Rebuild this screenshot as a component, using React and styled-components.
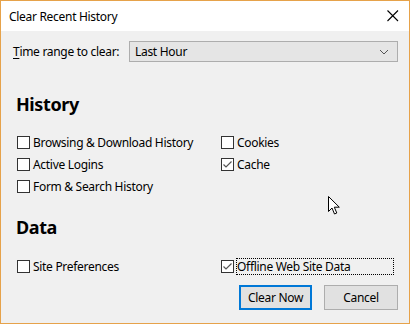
import styled, { createGlobalStyle } from 'styled-components'

const GlobalStyle = createGlobalStyle`
  html, body {
    margin: 0;
    padding: 0;
    background: #f0f0f0;
  }
  body {
    font-family: 'Noto Sans', 'Open Sans', sans-serif;
    font-size: 12px;
    letter-spacing: -0.3px;
    color: #000000;
  }
`

const Window = styled.div`
  position: relative;
  width: 410px;
  height: 324px;
  box-sizing: border-box;
  border: 1px solid #e6a24a;
  background: #f0f0f0;
  display: flex;
  flex-direction: column;
  overflow: hidden;
`

const TitleBar = styled.div`
  height: 30px;
  background: #ffffff;
  display: flex;
  align-items: center;
  justify-content: space-between;
  padding: 0 9px 0 8px;
`

const Title = styled.span`
  font-size: 12px;
  color: #000000;
`

const CloseButton = styled.span`
  display: flex;
  width: 14px;
  height: 14px;
`

const Body = styled.div`
  flex: 1;
  display: flex;
  flex-direction: column;
  padding: 10px 11px 0 12px;
`

const RangeRow = styled.div`
  display: flex;
  align-items: center;
  gap: 12px;
`

const RangeLabel = styled.label`
  width: 104px;
  white-space: nowrap;
  font-size: 12px;
  u {
    text-decoration: underline;
    text-underline-offset: 2px;
  }
`

const Select = styled.div`
  flex: 1;
  height: 21px;
  box-sizing: border-box;
  border: 1px solid #adadad;
  background: #e5e5e5;
  display: flex;
  align-items: center;
  justify-content: space-between;
  padding: 0 8px 0 5px;
  font-size: 12px;
`

const Heading = styled.h2`
  margin: ${(p) => p.$top}px 0 0 3px;
  font-size: 18px;
  line-height: 24px;
  font-weight: 700;
  letter-spacing: -0.4px;
`

const OptionGrid = styled.div`
  display: grid;
  grid-template-columns: 204px 1fr;
  grid-auto-rows: 13px;
  row-gap: 9px;
  margin: ${(p) => p.$top}px 0 0 4px;
`

const Option = styled.label`
  display: flex;
  align-items: center;
  height: 13px;
  gap: 2px;
  font-size: 12px;
  white-space: nowrap;
  grid-column: ${(p) => p.$col};
  grid-row: ${(p) => p.$row};
`

const Box = styled.span`
  width: 13px;
  height: 13px;
  box-sizing: border-box;
  border: 1px solid #333333;
  background: #ffffff;
  display: flex;
  align-items: center;
  justify-content: center;
  flex: none;
`

const LabelText = styled.span`
  display: flex;
  align-items: center;
  height: 17px;
  box-sizing: border-box;
  border: 1px ${(p) => (p.$focused ? 'dotted #000000' : 'solid transparent')};
  width: ${(p) => (p.$focused ? '158px' : 'auto')};
`

const ButtonRow = styled.div`
  display: flex;
  justify-content: flex-end;
  gap: 12px;
  margin-top: 12px;
`

const Button = styled.button`
  width: ${(p) => p.$w}px;
  height: 25px;
  box-sizing: border-box;
  font-family: 'Noto Sans', 'Open Sans', sans-serif;
  font-size: 12px;
  letter-spacing: -0.3px;
  color: #000000;
  background: #e1e1e1;
  border: ${(p) => (p.$default ? '2px solid #0078d7' : '1px solid #adadad')};
  padding: 0;
`

const Cursor = styled.svg`
  position: absolute;
  left: 327px;
  top: 195px;
`

const Check = () => (
  <svg width="11" height="11" viewBox="0 0 11 11">
    <path d="M1.5 5.5 L4 8 L9.5 2.5" fill="none" stroke="#555555" strokeWidth="1.2" />
  </svg>
)

const Checkbox = ({ label, checked, col, row, focused }) => (
  <Option $col={col} $row={row}>
    <Box>{checked && <Check />}</Box>
    <LabelText $focused={focused}>{label}</LabelText>
  </Option>
)

const App = () => {
  return (
    <>
      <GlobalStyle />
      <Window>
        <TitleBar>
          <Title>Clear Recent History</Title>
          <CloseButton>
            <svg width="14" height="14" viewBox="0 0 14 14">
              <path d="M1.5 1.5 L12 12 M12 1.5 L1.5 12" stroke="#000000" strokeWidth="1.1" />
            </svg>
          </CloseButton>
        </TitleBar>
        <Body>
          <RangeRow>
            <RangeLabel>
              <u>T</u>ime range to clear:
            </RangeLabel>
            <Select>
              <span>Last Hour</span>
              <svg width="10" height="6" viewBox="0 0 10 6">
                <path d="M1 1 L5 5 L9 1" fill="none" stroke="#555555" strokeWidth="1" />
              </svg>
            </Select>
          </RangeRow>

          <Heading $top={30}>History</Heading>
          <OptionGrid $top={20}>
            <Checkbox label="Browsing &amp; Download History" col={1} row={1} />
            <Checkbox label="Active Logins" col={1} row={2} />
            <Checkbox label="Form &amp; Search History" col={1} row={3} />
            <Checkbox label="Cookies" col={2} row={1} />
            <Checkbox label="Cache" checked col={2} row={2} />
          </OptionGrid>

          <Heading $top={22}>Data</Heading>
          <OptionGrid $top={21}>
            <Checkbox label="Site Preferences" col={1} row={1} />
            <Checkbox label="Offline Web Site Data" checked focused col={2} row={1} />
          </OptionGrid>

          <ButtonRow>
            <Button $default $w={73}>Clear Now</Button>
            <Button $w={74}>Cancel</Button>
          </ButtonRow>
        </Body>
        <Cursor width="13" height="20" viewBox="0 0 13 20">
          <path
            d="M0.5 0.5 L0.5 15.5 L4 12 L6.5 18 L8.8 17 L6.3 11.2 L11.3 11.2 Z"
            fill="#ffffff"
            stroke="#000000"
            strokeWidth="1"
            strokeLinejoin="miter"
          />
        </Cursor>
      </Window>
    </>
  )
}

export default App
